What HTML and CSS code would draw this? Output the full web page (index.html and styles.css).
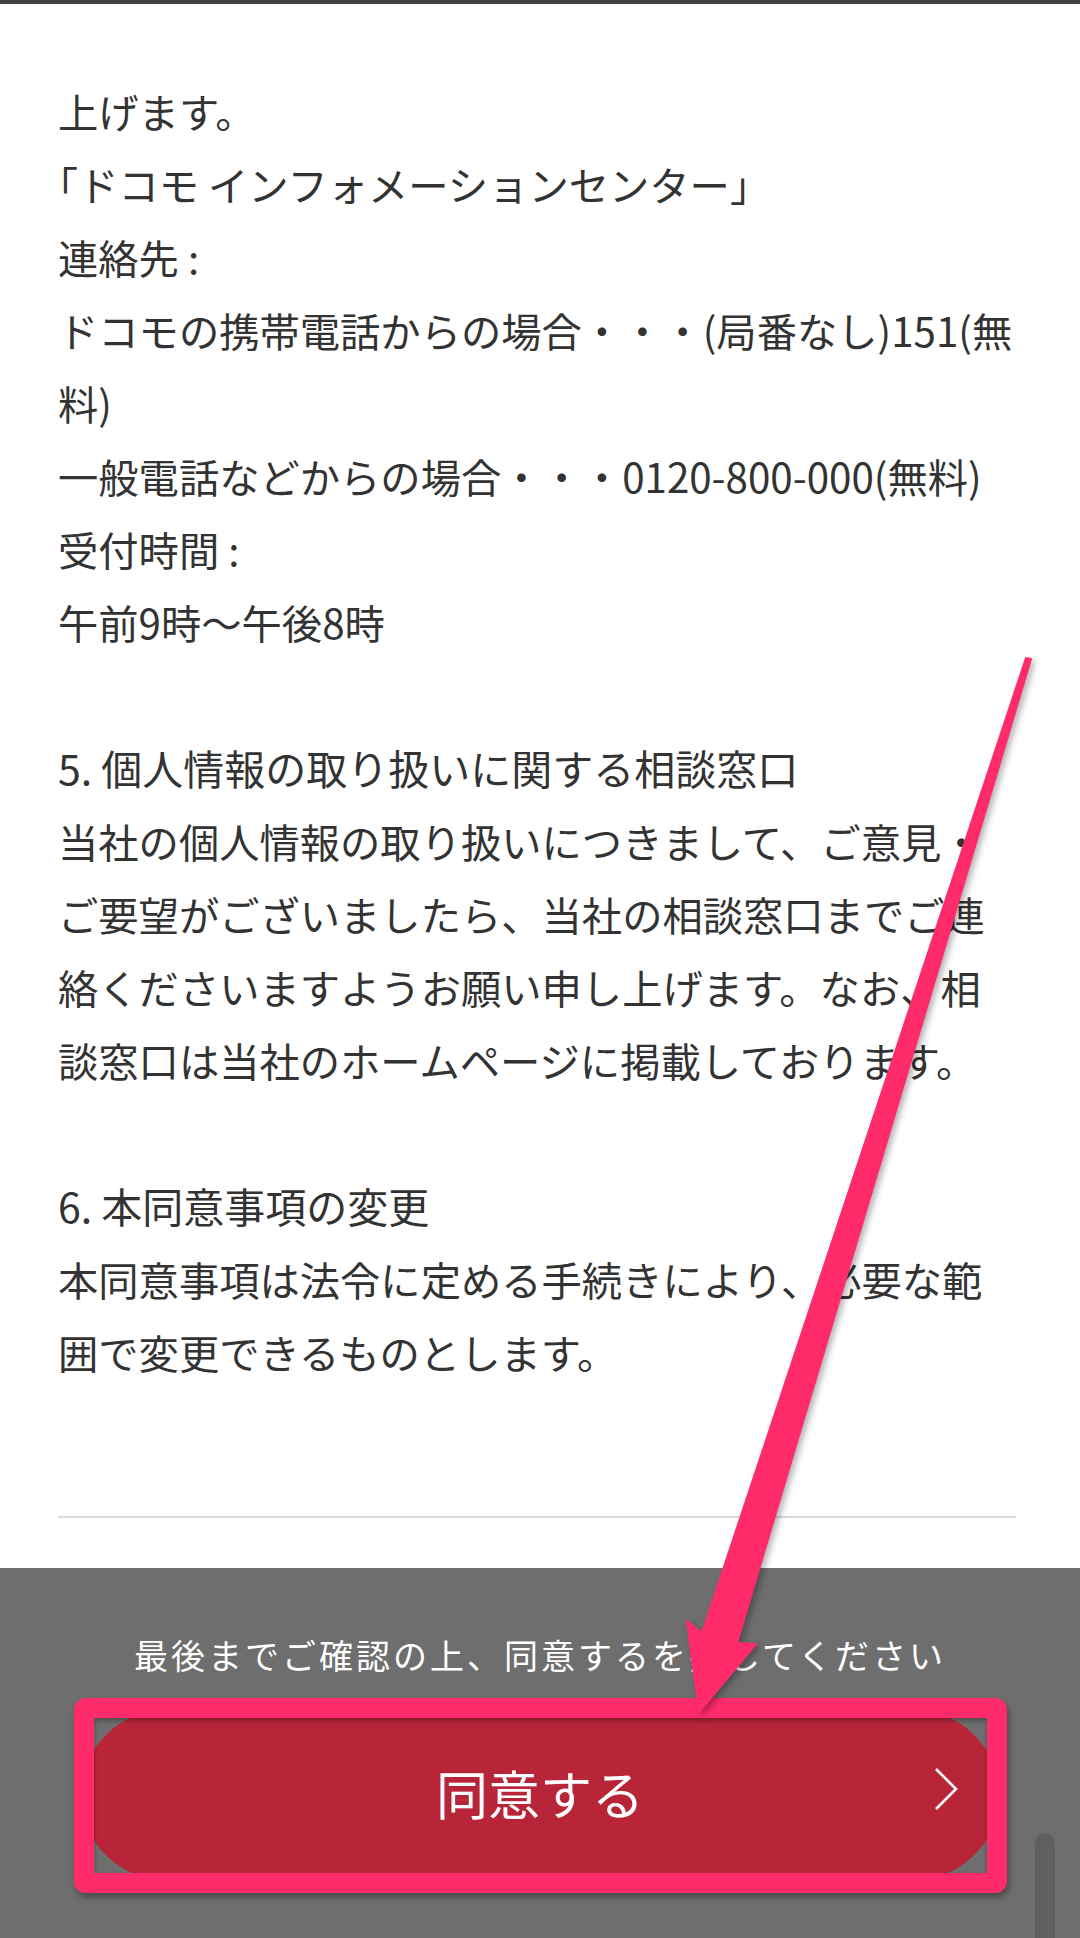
FILE: index.html
```html
<!DOCTYPE html>
<html lang="ja">
<head>
<meta charset="utf-8">
<title>同意事項</title>
<link rel="stylesheet" href="styles.css">
</head>
<body>
<div class="page">
  <div class="topbar"></div>
  <main class="content">
    <div class="terms">
      <p class="para">上げます。<br><span class="halt">「</span>ドコモ インフォメーションセンター」<br>連絡先 :<br>ドコモの携帯電話からの場合・・・(局番なし)151(無<br>料)<br>一般電話などからの場合・・・0120-800-000(無料)<br>受付時間 :<br>午前9時〜午後8時</p>
      <p class="para"><span class="heading">5. 個人情報の取り扱いに関する相談窓口</span><br>当社の個人情報の取り扱いにつきまして、ご意見・<br>ご要望がございましたら、当社の相談窓口までご連<br>絡くださいますようお願い申し上げます。なお、相<br>談窓口は当社のホームページに掲載しております。</p>
      <p class="para"><span class="heading">6. 本同意事項の変更</span><br>本同意事項は法令に定める手続きにより、必要な範<br>囲で変更できるものとします。</p>
    </div>
    <hr class="divider">
  </main>
  <footer class="footer">
    <p class="notice">最後までご確認の上、同意するを押してください</p>
    <button class="agree" type="button">
      <span class="agree-label">同意する</span>
      <svg class="chevron" width="24" height="44" viewBox="0 0 24 44" aria-hidden="true">
        <polyline points="2,2 22,22 2,42" fill="none" stroke="#ffffff" stroke-width="2.6"/>
      </svg>
    </button>
  </footer>
  <div class="scroll-thumb"></div>
  <div class="mark-box"></div>
  <svg class="mark-arrow" width="1080" height="1938" viewBox="0 0 1080 1938" aria-hidden="true">
    <polygon points="1026,658 1031,659 737,1643 756,1644 699,1712 687,1621 702,1633" fill="#ff2b6b" stroke="#ff2b6b" stroke-width="2" stroke-linejoin="round"/>
  </svg>
</div>
</body>
</html>
```

FILE: styles.css
```css
* { box-sizing: border-box; }

html, body {
  margin: 0;
  padding: 0;
  background: #ffffff;
}

body {
  width: 1080px;
  height: 1938px;
  overflow: hidden;
  font-family: "Noto Sans CJK JP", "Noto Sans", sans-serif;
}

.page {
  position: relative;
  width: 1080px;
  height: 1938px;
  display: flex;
  flex-direction: column;
}

.topbar {
  height: 4px;
  background: #424242;
  flex: none;
}

.content {
  flex: none;
  padding: 70px 64px 0 58px;
}

.terms {
  color: #333333;
  font-size: 40.3px;
  line-height: 73px;
  white-space: nowrap;
}

.halt {
  font-feature-settings: "halt";
}

.heading {
  font-size: 41px;
}

.para {
  margin: 0 0 73px 0;
}

.para:last-child {
  margin-bottom: 128px;
}

.divider {
  margin: 0;
  border: 0;
  height: 2px;
  background: #dadada;
}

.footer {
  margin-top: 50px;
  flex: 1;
  background: #6e6e6e;
  display: flex;
  flex-direction: column;
  align-items: stretch;
  padding: 62px 81px 0 81px;
}

.notice {
  margin: 0 0 30px 0;
  color: #ffffff;
  font-size: 34px;
  line-height: 50px;
  letter-spacing: 3px;
  text-align: center;
}

.agree {
  height: 170px;
  border: 0;
  border-radius: 85px;
  background: #b92538;
  color: #ffffff;
  font-family: inherit;
  font-size: 52px;
  padding: 0;
  display: grid;
  grid-template-columns: 1fr auto 1fr;
  align-items: center;
}

.agree-label {
  grid-column: 2;
  line-height: 60px;
  margin-top: -4px;
}

.chevron {
  grid-column: 3;
  justify-self: end;
  margin-right: 41px;
  margin-top: -12px;
}

.scroll-thumb {
  position: absolute;
  left: 1035px;
  top: 1833px;
  width: 20px;
  height: 120px;
  border-radius: 10px;
  background: #5f5f5f;
}

.mark-box {
  position: absolute;
  left: 74px;
  top: 1698px;
  width: 933px;
  height: 195px;
  border: 20px solid #ff2b6b;
  border-radius: 12px;
  box-shadow: 2px 4px 6px rgba(0, 0, 0, 0.35), inset 0 3px 5px rgba(0, 0, 0, 0.3);
}

.mark-arrow {
  position: absolute;
  left: 0;
  top: 0;
  pointer-events: none;
  filter: drop-shadow(3px 3px 3px rgba(0, 0, 0, 0.3));
}
```
